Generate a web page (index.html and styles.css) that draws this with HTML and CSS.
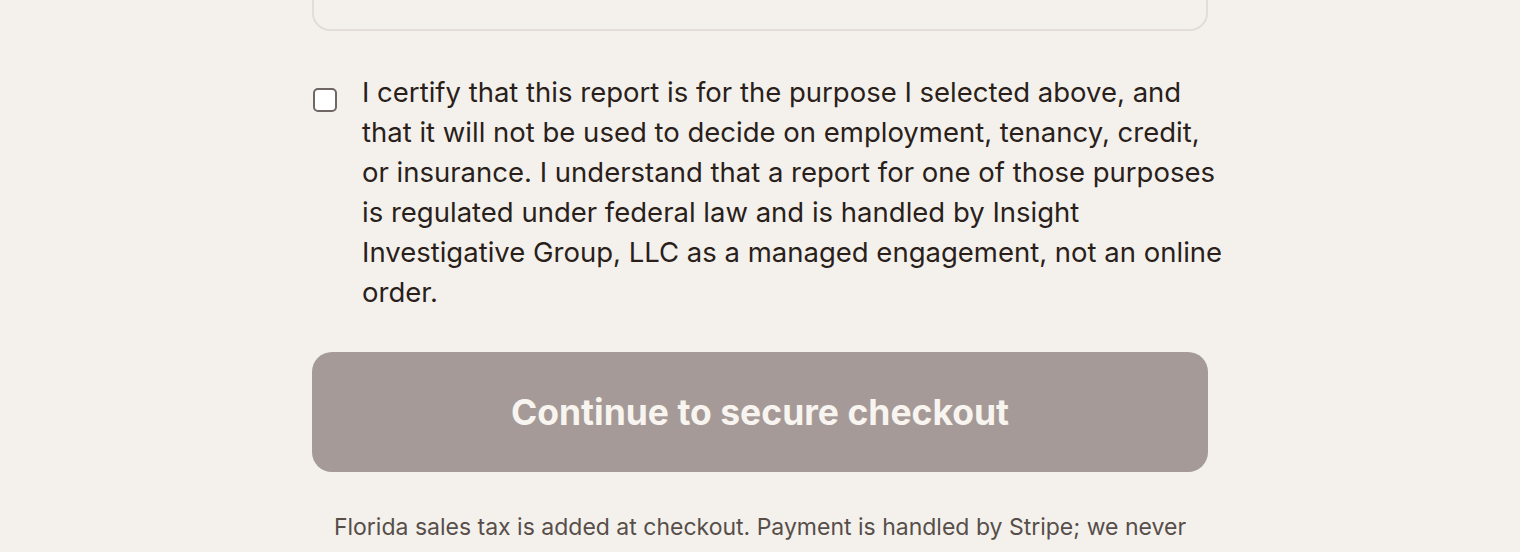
FILE: index.html
```html
<!DOCTYPE html>
<html lang="en">
<head>
  <meta charset="UTF-8" />
  <meta name="viewport" content="width=device-width, initial-scale=1.0" />
  <title>Order - Secure checkout</title>
  <link rel="stylesheet" href="styles.css">
</head>
<body>
  <div class="container">
    <!-- summary card (scrolled past) -->
    <div class="summary-card"></div>

    <label class="certify">
      <input type="checkbox" id="certify" />
      <span class="certify-text">I certify that this report is for the purpose I selected above, and that it will not be used to decide on employment, tenancy, credit, or insurance. I understand that a report for one of those purposes is regulated under federal law and is handled by Insight Investigative Group, LLC as a managed engagement, not an online order.</span>
    </label>

    <button class="checkout-btn" id="checkoutBtn" disabled>Continue to secure checkout</button>

    <p class="fine-print">Florida sales tax is added at checkout. Payment is handled by Stripe; we never see or store your card details.</p>
  </div>

  <script>
    document.getElementById("certify").addEventListener("change", function (e) {
      document.getElementById("checkoutBtn").disabled = !e.target.checked;
    });
  </script>
</body>
</html>
```

FILE: styles.css
```css
body {
  font-family: Inter, "Noto Sans", sans-serif;
  background: #f4f1ec;
  color: #2a1f1b;
  margin: 0;
  padding: 0;
  overflow: hidden;
}

.container {
  width: 896px;
  margin: 0 auto;
}

.summary-card {
  height: 110px;
  margin-top: -79px;
  border: 2px solid #e4dcd7;
  border-radius: 18px;
  box-sizing: border-box;
}

.certify {
  display: flex;
  gap: 25px;
  margin-top: 41px;
  cursor: pointer;
}

.certify input {
  appearance: none;
  flex: 0 0 auto;
  width: 24px;
  height: 24px;
  margin: 16px 0 0 1px;
  background: #fff;
  border: 2px solid #6e6764;
  border-radius: 5px;
  box-sizing: border-box;
}

.certify input:checked {
  background: #2a1f1b;
  border-color: #2a1f1b;
}

.certify-text {
  margin-right: -20px;
  font-size: 27.5px;
  line-height: 40px;
}

.checkout-btn {
  display: block;
  width: 100%;
  height: 120px;
  margin-top: 40px;
  border: none;
  border-radius: 20px;
  background: #a59a97;
  color: #f8f4ef;
  font-family: inherit;
  font-size: 35.5px;
  font-weight: 700;
  cursor: pointer;
}

.checkout-btn:disabled {
  cursor: not-allowed;
}

.fine-print {
  margin: 37px 8px 0;
  font-size: 23px;
  line-height: 36px;
  color: #574e4a;
  text-align: center;
}
```
